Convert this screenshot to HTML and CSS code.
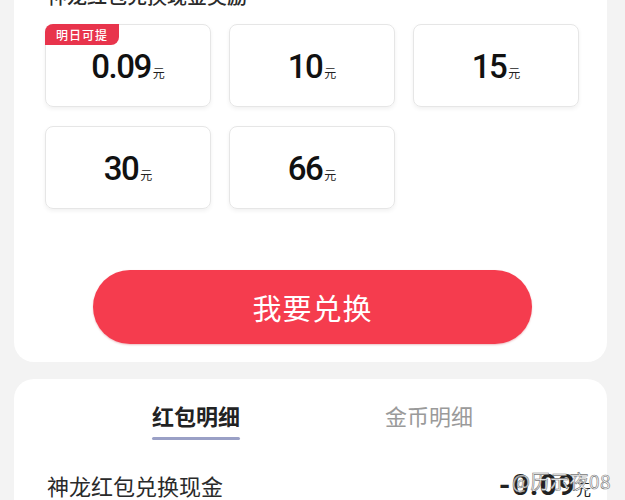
FILE: index.html
```html
<!DOCTYPE html>
<html lang="zh">
<head>
<meta charset="utf-8">
<link rel="stylesheet" href="styles.css">
</head>
<body>
<div class="page">
  <section class="panel exchange">
    <h2 class="title">神龙红包兑换现金奖励</h2>
    <div class="grid">
      <div class="amount"><span class="badge">明日可提</span><span class="num">0.09</span><span class="unit">元</span></div>
      <div class="amount"><span class="num">10</span><span class="unit">元</span></div>
      <div class="amount"><span class="num">15</span><span class="unit">元</span></div>
      <div class="amount"><span class="num">30</span><span class="unit">元</span></div>
      <div class="amount"><span class="num">66</span><span class="unit">元</span></div>
    </div>
    <div class="btn-wrap"><button class="btn">我要兑换</button></div>
  </section>
  <section class="panel detail">
    <div class="tabs">
      <div class="tab active">红包明细</div>
      <div class="tab">金币明细</div>
    </div>
    <div class="row">
      <span class="row-title">神龙红包兑换现金</span>
      <span class="row-amount">-0.09<span class="row-unit">元</span></span>
      <span class="watermark">@历示夜08</span>
    </div>
  </section>
</div>
</body>
</html>
```
FILE: styles.css
```css
* { box-sizing: border-box; }
html, body { margin: 0; padding: 0; }
body {
  background: #f3f3f3;
  font-family: "Noto Sans CJK SC", "Noto Sans", sans-serif;
  color: #222;
  width: 625px;
  height: 500px;
  overflow: hidden;
}
.page {
  padding: 0 18px 0 14px;
  display: flex;
  flex-direction: column;
  gap: 17px;
}
.panel {
  background: #fff;
  border-radius: 20px;
}
.exchange {
  border-top-left-radius: 0;
  border-top-right-radius: 0;
  padding: 0 0 18px 31px;
}
.title {
  margin: -16px 0 0 2px;
  font-size: 20px;
  line-height: 24px;
  font-weight: 500;
  color: #2a2a2a;
  height: 24px;
}
.grid {
  margin-top: 16px;
  width: 535px;
  display: grid;
  grid-template-columns: repeat(3, 166px);
  column-gap: 18px;
  row-gap: 19px;
}
.amount {
  position: relative;
  height: 83px;
  border: 1px solid #e6e6e6;
  border-radius: 8px;
  box-shadow: 0 2px 4px rgba(0,0,0,0.06);
  display: flex;
  align-items: baseline;
  justify-content: center;
  padding-top: 22px;
}
.num {
  font-family: "Roboto", "Liberation Sans", sans-serif;
  font-weight: 500;
  font-size: 33px;
  line-height: 40px;
  letter-spacing: -1.5px;
  color: #111;
}
.unit {
  font-size: 12px;
  margin-left: 2px;
  color: #222;
}
.badge {
  position: absolute;
  left: -1px;
  top: -1px;
  width: 74px;
  height: 21px;
  background: #e8344c;
  color: #fff;
  font-size: 12px;
  font-weight: 500;
  line-height: 21px;
  text-align: center;
  letter-spacing: 1px;
  border-radius: 8px 0 8px 0;
}
.btn-wrap {
  display: flex;
  padding-left: 48px;
  margin-top: 61px;
}
.btn {
  width: 439px;
  height: 74px;
  border: none;
  border-radius: 37px;
  background: #f53c4e;
  color: #fff;
  font-family: "Noto Sans CJK SC", sans-serif;
  font-size: 29px;
  letter-spacing: 1px;
  box-shadow: 0 1px 2px rgba(180,0,20,0.25);
}
.detail {
  padding: 20px 0 0 33px;
  height: 140px;
}
.tabs {
  display: flex;
  padding-left: 105px;
  gap: 145px;
}
.tab {
  font-size: 22px;
  line-height: 32px;
  color: #9a9a9a;
  position: relative;
  padding-bottom: 9px;
}
.tab.active {
  color: #222;
  font-weight: 700;
}
.tab.active::after {
  content: "";
  position: absolute;
  left: 0;
  right: 0;
  bottom: 0;
  height: 3px;
  border-radius: 2px;
  background: #9aa0c6;
}
.row {
  position: relative;
  margin-top: 27px;
  display: flex;
  justify-content: space-between;
  align-items: baseline;
  padding-right: 15px;
}
.row-title {
  font-size: 22px;
  line-height: 28px;
  color: #2a2a2a;
}
.row-amount {
  font-family: "Roboto", sans-serif;
  font-weight: 700;
  font-size: 30px;
  letter-spacing: 1px;
  color: #222;
}
.row-unit {
  font-family: "Noto Sans CJK SC", sans-serif;
  font-size: 15px;
  font-weight: 400;
}
.watermark {
  position: absolute;
  right: -4px;
  top: 0;
  font-size: 19px;
  color: #fff;
  -webkit-text-stroke: 0.6px #777;
  letter-spacing: 0.5px;
}
```
